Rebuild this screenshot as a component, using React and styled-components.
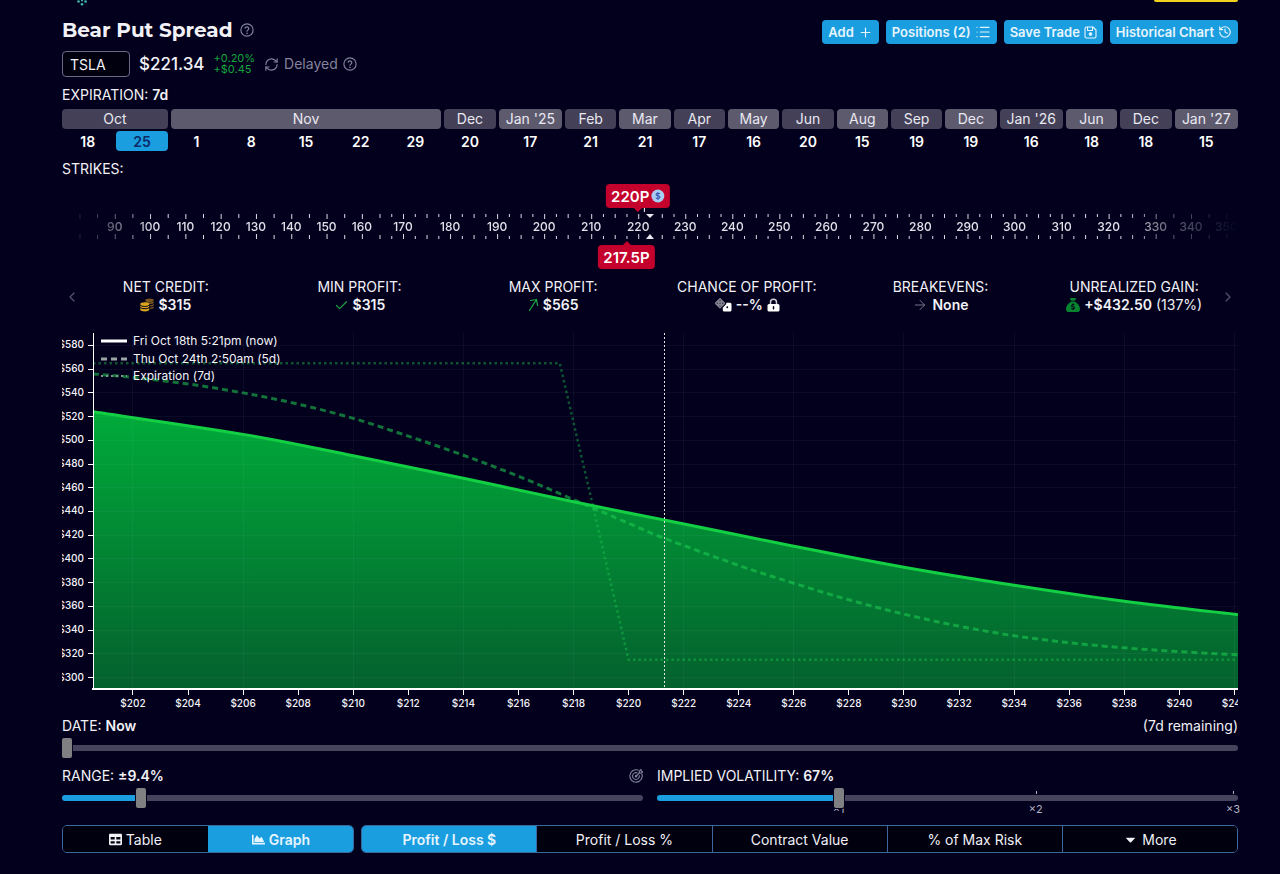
import React, { useLayoutEffect, useRef, useState } from 'react';
import styled, { createGlobalStyle, css } from 'styled-components';
import { FaCaretDown, FaChartArea, FaTable } from 'react-icons/fa';
import { FaSackDollar } from 'react-icons/fa6';
import { ArrowRight, Check, ChevronLeft, ChevronRight, History, List, Plus, RefreshCw } from 'lucide-react';

const colors = {
  page: '#02001d',
  blue: '#1b9ee0',
  track: '#46435c',
  red: '#c4002c',
  muted: '#84829c',
  text: '#f1f1f6',
};

const GlobalStyle = createGlobalStyle`
  * {
    box-sizing: border-box;
  }

  body {
    margin: 0;
    background: ${colors.page};
    color: ${colors.text};
    font-family: Inter, 'Liberation Sans', sans-serif;
    font-size: 14px;
    line-height: 18px;
  }

  button, input {
    font-family: inherit;
  }

  b {
    font-weight: 600;
  }
`;

const Page = styled.main`
  padding: 0 42px 20px 62px;
`;

const TopBar = styled.header`
  display: flex;
  justify-content: space-between;
  align-items: flex-start;
  height: 6px;
  padding-left: 14px;
`;

const Upgrade = styled.div`
  width: 84px;
  height: 2px;
  border-radius: 0 0 4px 4px;
  background: #f2d21c;
`;

const TitleRow = styled.div`
  display: flex;
  justify-content: space-between;
  align-items: flex-start;
  margin-top: 14px;
`;

const Title = styled.h1`
  display: flex;
  align-items: center;
  gap: 7px;
  margin: 0;
  font-family: Montserrat, Inter, sans-serif;
  font-size: 20px;
  font-weight: 700;
  line-height: 20px;
`;

const Actions = styled.div`
  display: flex;
  gap: 7px;
`;

const ActionButton = styled.button`
  display: flex;
  align-items: center;
  gap: 4px;
  height: 24px;
  padding: 0 6px;
  border: none;
  border-radius: 4px;
  background: ${colors.blue};
  color: #e6f5fd;
  font-size: 13px;
  font-weight: 600;
  cursor: pointer;
`;

const IconButton = styled.button`
  display: flex;
  padding: 0;
  border: none;
  background: none;
  color: ${colors.muted};
  cursor: pointer;
`;

const QuoteRow = styled.div`
  display: flex;
  align-items: center;
  gap: 9px;
  margin-top: 7px;
`;

const SymbolInput = styled.input`
  width: 68px;
  height: 26px;
  padding: 0 7px;
  border: 1px solid #6b6984;
  border-radius: 4px;
  background: #00000f;
  color: ${colors.text};
  font-size: 14px;
`;

const Price = styled.span`
  font-size: 17px;
  font-weight: 500;
`;

const Change = styled.span`
  display: flex;
  flex-direction: column;
  font-size: 11px;
  line-height: 11px;
  color: #16a83c;
`;

const Delayed = styled.span`
  display: flex;
  align-items: center;
  gap: 5px;
  color: ${colors.muted};
`;

const Label = styled.label`
  display: block;
`;

const Section = styled.section`
  margin-top: ${(props) => props.$top}px;
`;

const Months = styled.div`
  display: flex;
  gap: 3px;
  margin-top: 5px;
`;

const Month = styled.div`
  flex: ${(props) => props.$units} 1 0;
  min-width: 0;
`;

const MonthName = styled.div`
  height: 20px;
  border-radius: 4px;
  background: ${(props) => (props.$light ? '#5d5a6e' : '#434058')};
  color: #e9e8f0;
  text-align: center;
  line-height: 20px;
`;

const Days = styled.div`
  display: flex;
  gap: 3px;
  margin-top: 2px;
`;

const Day = styled.button`
  flex: 1;
  min-width: 0;
  height: 20px;
  padding: 0;
  border: none;
  border-radius: 4px;
  background: ${(props) => (props.$active ? colors.blue : 'transparent')};
  color: ${(props) => (props.$active ? '#0a2c66' : '#ffffff')};
  font-size: 14px;
  font-weight: 600;
  cursor: pointer;
`;

const RulerBox = styled.div`
  position: relative;
  margin-top: 6px;
  padding: 24px 0;
`;

const RulerSvg = styled.svg`
  display: block;
  width: 100%;
  height: 37px;
  font-size: 12px;
  font-weight: 500;
`;

const FadedTicks = styled.g`
  mask: url(#rulerFade);
`;

const Chip = styled.button`
  position: absolute;
  display: flex;
  align-items: center;
  gap: 2px;
  height: 24px;
  padding: 0 5px;
  border: none;
  border-radius: 4px;
  background: ${colors.red};
  color: #fff;
  font-size: 15px;
  font-weight: 600;
  transform: translateX(-50%);
  cursor: pointer;
  ${(props) => (props.$below ? 'bottom: 0;' : 'top: 0;')}

  &::after {
    content: '';
    position: absolute;
    left: 50%;
    margin-left: -4px;
    border: 4px solid transparent;
    ${(props) =>
      props.$below
        ? css`bottom: 100%; border-top: none; border-bottom-color: ${colors.red};`
        : css`top: 100%; border-bottom: none; border-top-color: ${colors.red};`}
  }
`;

const StatsRow = styled.section`
  position: relative;
  display: grid;
  grid-template-columns: repeat(6, 1fr);
  margin-top: 9px;
  padding: 0 7px;
`;

const Stat = styled.div`
  text-align: center;
`;

const StatValue = styled.div`
  display: flex;
  justify-content: center;
  align-items: center;
  gap: 4px;
  white-space: pre;
`;

const StatsArrow = styled(IconButton)`
  position: absolute;
  top: 11px;
  color: #55536c;
  ${(props) => (props.$right ? 'right: 2px;' : 'left: 2px;')}
`;

const ChartBox = styled.div`
  margin-top: 19px;
`;

const ChartSvg = styled.svg`
  display: block;
  width: 100%;
  height: 377px;
  fill: #f4f4f8;
  font-size: 10px;
  font-weight: 500;
`;

const Legend = styled.g`
  font-size: 12px;
  font-weight: 400;
`;

const SliderHead = styled.div`
  display: flex;
  justify-content: space-between;
  align-items: center;
`;

const SliderColumns = styled.div`
  display: grid;
  grid-template-columns: 1fr 1fr;
  gap: 14px;
  margin-top: 9px;
`;

const SliderWrap = styled.div`
  position: relative;
  margin-top: 3px;
`;

const Range = styled.input`
  appearance: none;
  position: relative;
  display: block;
  width: 100%;
  height: 20px;
  margin: 0;
  background: transparent;
  cursor: pointer;

  &::-webkit-slider-runnable-track {
    height: 6px;
    border-radius: 3px;
    background: linear-gradient(to right, ${colors.blue} var(--filled), ${colors.track} var(--filled));
  }

  &::-webkit-slider-thumb {
    appearance: none;
    width: 10px;
    height: 20px;
    margin-top: -7px;
    border-radius: 2px;
    background: #807f82;
    box-shadow: 0 0 0 1px ${colors.page};
  }
`;

const Mark = styled.span`
  position: absolute;
  top: 3px;
  padding-top: 10px;
  color: #b5b3c4;
  font-size: 11px;
  line-height: 16px;
  transform: translateX(-50%);

  &::before {
    content: '';
    position: absolute;
    top: 0;
    left: 50%;
    width: 1px;
    height: 3px;
    background: #b5b3c4;
  }
`;

const Tabs = styled.nav`
  display: grid;
  grid-template-columns: 1fr 3fr;
  gap: 7px;
  margin-top: 17px;
`;

const TabGroup = styled.div`
  display: flex;
  height: 28px;
  border: 1px solid #3d679f;
  border-radius: 5px;
  overflow: hidden;
`;

const Tab = styled.button`
  display: flex;
  flex: 1 1 0;
  justify-content: center;
  align-items: center;
  gap: 4px;
  border: none;
  border-left: 1px solid #3d679f;
  background: #00000f;
  color: ${colors.text};
  font-size: 14px;
  cursor: pointer;

  &:first-child {
    border-left: none;
  }

  ${(props) =>
    props.$active &&
    css`
      background: ${colors.blue};
      border-color: ${colors.blue};
      color: #e6f5fd;
      font-weight: 600;
    `}
`;

const HelpIcon = ({ size = 14 }) => (
  <svg width={size} height={size} viewBox="0 0 24 24" fill="none" stroke="currentColor" strokeWidth="2" strokeLinecap="round">
    <circle cx="12" cy="12" r="10.5" />
    <path d="M8.8 9a3.2 3.2 0 0 1 6.3.8c0 2.2-3.1 2.6-3.1 4.4" />
    <path d="M12 17.6v.2" strokeWidth="2.6" />
  </svg>
);

const FloppyIcon = () => (
  <svg width="13" height="13" viewBox="0 0 26 26" fill="none" stroke="currentColor" strokeWidth="2.2" strokeLinejoin="round">
    <path d="M5 2h13l6 6v13a3 3 0 0 1-3 3H5a3 3 0 0 1-3-3V5a3 3 0 0 1 3-3z" />
    <path d="M7 2v7h10V2" />
    <circle cx="13" cy="16" r="2.6" fill="currentColor" />
  </svg>
);

const TargetIcon = () => (
  <svg width="14" height="14" viewBox="0 0 28 28" fill="none" stroke="currentColor" strokeWidth="2.2" strokeLinecap="round">
    <path d="M18 2.2A12.4 12.4 0 1 0 25.8 10" />
    <path d="M16 7.6A6.8 6.8 0 1 0 20.6 13" />
    <path d="M14 14.5l7-7M20.5 7.5V4l3.5-3 .6 3.4 3.1.6-3.2 3.2z" />
    <circle cx="14" cy="14.5" r="1.4" />
  </svg>
);

const CoinsIcon = () => (
  <svg width="14" height="14" viewBox="0 0 28 28">
    <g fill="#7b5620">
      <ellipse cx="19" cy="4.5" rx="8.5" ry="3.6" />
      <path d="M10.5 6.5c2 3 15 3 17 0v3c-1.5 2-5 2.8-8 2.8l-9-3z" />
      <path d="M20.5 14c3 0 6-1 7-2.5v3c-1 1.5-4 2.5-7 2.5zM20.5 19c3 0 6-1 7-2.5v3c-1 1.5-4 2.500-7 2.500z" />
    </g>
    <g fill="#d9a51e">
      <ellipse cx="9.5" cy="12.5" rx="9" ry="3.8" />
      <path d="M.5 14.8c2.5 3.4 15.5 3.4 18 0v3c-2.5 3.4-15.5 3.4-18 0z" />
      <path d="M.5 19.6c2.5 3.4 15.5 3.4 18 0v3.8c-1.5 4.6-16.5 4.6-18 0z" />
    </g>
    <path d="M.5 14.2c2.5 3.4 15.5 3.4 18 0M.5 19.2c2.5 3.4 15.5 3.4 18 0" fill="none" stroke={colors.page} strokeWidth="1" />
  </svg>
);

const SteepArrowIcon = () => (
  <svg width="11" height="14" viewBox="0 0 22 28" fill="none" stroke="#1fae45" strokeWidth="2.4" strokeLinecap="round" strokeLinejoin="round">
    <path d="M3 25L17 3M5 5l12-2 2 12" />
  </svg>
);

const DiceIcon = () => (
  <svg width="18" height="14" viewBox="0 0 36 28">
    <rect x="4" y="2.5" width="16" height="16" rx="3" fill="#85838f" transform="rotate(45 12 10.5)" />
    <g fill={colors.page} opacity="0.7">
      <circle cx="12" cy="5" r="1.3" />
      <circle cx="6.5" cy="10.5" r="1.3" />
      <circle cx="12" cy="10.5" r="1.3" />
      <circle cx="17.5" cy="10.5" r="1.3" />
      <circle cx="12" cy="16" r="1.3" />
    </g>
    <path d="M24.5 9.5H32a3 3 0 0 1 3 3V24a3 3 0 0 1-3 3H20.5a3 3 0 0 1-3-3v-4.5l7-7.5z" fill="#fff" />
    <circle cx="26.5" cy="18.5" r="1.9" fill={colors.page} />
  </svg>
);

const LockIcon = () => (
  <svg width="13" height="14" viewBox="0 0 26 28">
    <path d="M7 13V8.5a6 6 0 0 1 12 0V13" fill="none" stroke="#cfced6" strokeWidth="3" />
    <rect x="1" y="12" width="24" height="15" rx="3" fill="#fff" />
    <rect x="11.5" y="16" width="3" height="7" rx="1.5" fill={colors.page} />
  </svg>
);

const CoinBadge = () => (
  <svg width="14" height="14" viewBox="0 0 28 28">
    <circle cx="14" cy="14" r="13" fill="#a9cdf0" />
    <path d="M18 10c-.8-1.800-7.600-2.400-7.600.8 0 3.600 7.800 2 7.800 5.800 0 3.400-7.400 3-8.200.6M14 6v16" fill="none" stroke="#3459b4" strokeWidth="2.2" />
  </svg>
);

const months = [
  { name: 'Oct', days: [18, 25], units: 105 },
  { name: 'Nov', days: [1, 8, 15, 22, 29], units: 269 },
  { name: 'Dec', days: [20], units: 51 },
  { name: "Jan '25", days: [17], units: 63 },
  { name: 'Feb', days: [21], units: 51 },
  { name: 'Mar', days: [21], units: 51 },
  { name: 'Apr', days: [17], units: 51 },
  { name: 'May', days: [16], units: 51 },
  { name: 'Jun', days: [20], units: 51 },
  { name: 'Aug', days: [15], units: 51 },
  { name: 'Sep', days: [19], units: 51 },
  { name: 'Dec', days: [19], units: 51 },
  { name: "Jan '26", days: [16], units: 63 },
  { name: 'Jun', days: [18], units: 51 },
  { name: 'Dec', days: [18], units: 51 },
  { name: "Jan '27", days: [15], units: 63 },
];

const range = (from, to, step) => {
  const out = [];
  for (let v = from; v <= to; v += step) out.push(v);
  return out;
};

// strikes listed every $2.5 take more room than the ones listed every $5
const strikePos = (strike) => {
  let units;
  if (strike <= 165) units = 317.5 - (165 - strike) * 3.53;
  else if (strike <= 330) units = 317.5 + (strike - 165) * 4.704;
  else units = 1093.7 + (strike - 330) * 3.53;
  return `${(units / 1176) * 100}%`;
};

const strikes = [...range(80, 165, 5), ...range(167.5, 330, 2.5), ...range(335, 350, 5)];

const tickHeight = (strike) => {
  if (strike % 10 === 0) return 5;
  return strike % 5 === 0 ? 4 : 3;
};

const Ruler = () => (
  <RulerBox>
    <RulerSvg>
      <defs>
        <linearGradient id="rulerGradient">
          <stop offset="0" stopColor="#fff" stopOpacity="0" />
          <stop offset="0.045" stopColor="#fff" stopOpacity="0.45" />
          <stop offset="0.08" stopColor="#fff" />
          <stop offset="0.9" stopColor="#fff" />
          <stop offset="0.94" stopColor="#fff" stopOpacity="0.45" />
          <stop offset="1" stopColor="#fff" stopOpacity="0" />
        </linearGradient>
        <mask id="rulerFade" maskUnits="userSpaceOnUse" x="0" y="0" width="100%" height="37">
          <rect width="100%" height="37" fill="url(#rulerGradient)" />
        </mask>
      </defs>
      <FadedTicks>
        {strikes.map((s) => (
          <React.Fragment key={s}>
            <rect x={strikePos(s)} y="6" width="1" height={tickHeight(s)} fill="#dcdbe6" />
            <rect x={strikePos(s)} y={31 - tickHeight(s)} width="1" height={tickHeight(s)} fill="#dcdbe6" />
          </React.Fragment>
        ))}
        {range(90, 350, 10).map((s) => (
          <text key={s} x={strikePos(s)} y="23" textAnchor="middle" fill="#e2e1ea">
            {s}
          </text>
        ))}
      </FadedTicks>
      <rect x={strikePos(221.2)} y="0" width="1" height="4" fill="#fff" />
      <svg x={strikePos(222.5)} y="0" overflow="visible">
        <path d="M-4 6h8l-4 4zM-4 31h8l-4-5z" fill="#e8e8f0" />
      </svg>
    </RulerSvg>
    <Chip style={{ left: strikePos(220) }}>
      220P <CoinBadge />
    </Chip>
    <Chip $below style={{ left: strikePos(217.5) }}>
      217.5P
    </Chip>
  </RulerBox>
);

const stats = [
  { label: 'NET CREDIT:', icon: <CoinsIcon />, value: <b>$315</b> },
  { label: 'MIN PROFIT:', icon: <Check size={15} color="#1f9c43" />, value: <b>$315</b> },
  { label: 'MAX PROFIT:', icon: <SteepArrowIcon />, value: <b>$565</b> },
  { label: 'CHANCE OF PROFIT:', icon: <DiceIcon />, value: <><b>--%</b><LockIcon /></> },
  { label: 'BREAKEVENS:', icon: <ArrowRight size={16} strokeWidth={1.5} color="#77758a" />, value: <b>None</b> },
  {
    label: 'UNREALIZED GAIN:',
    icon: <FaSackDollar size={14} color="#07832f" />,
    value: <span><b>+$432.50</b> (137%)</span>,
  },
];

const nowCurve = [
  [200.55, 524], [206, 505], [210, 487], [214, 468], [218, 448.2], [221.34, 432.6],
  [226, 410.7], [230, 393], [234, 377.8], [238, 364.3], [242.13, 353],
];

const laterCurve = [
  [200.55, 556], [202, 553], [204, 547.5], [206, 540], [208, 530.5], [210, 518.5], [212, 503.5],
  [214, 487.4], [216, 469.7], [218, 450], [220, 430], [221.34, 417], [224, 394.5],
  [226, 379.5], [228, 365.5], [230, 353.4], [232, 343.3], [234, 335.2], [236, 329.3],
  [238, 325], [240, 321.8], [242.13, 319.2],
];

const expirationCurve = [[200.55, 565], [217.5, 565], [220, 315], [242.13, 315]];

const LEFT = 31;
const BOTTOM = 356;
const MIN_PRICE = 200.55;
const MAX_PRICE = 242.13;

const smoothPath = (points) => {
  let d = `M${points[0]}`;
  for (let i = 0; i < points.length - 1; i++) {
    const p0 = points[i - 1] || points[i];
    const p1 = points[i];
    const p2 = points[i + 1];
    const p3 = points[i + 2] || p2;
    d += `C${p1[0] + (p2[0] - p0[0]) / 6},${p1[1] + (p2[1] - p0[1]) / 6} `;
    d += `${p2[0] - (p3[0] - p1[0]) / 6},${p2[1] - (p3[1] - p1[1]) / 6} ${p2[0]},${p2[1]}`;
  }
  return d;
};

const Chart = () => {
  const box = useRef(null);
  const [width, setWidth] = useState(1176);

  useLayoutEffect(() => {
    const measure = () => setWidth(box.current.clientWidth);
    measure();
    window.addEventListener('resize', measure);
    return () => window.removeEventListener('resize', measure);
  }, []);

  const x = (price) => LEFT + ((price - MIN_PRICE) / (MAX_PRICE - MIN_PRICE)) * (width - LEFT);
  const y = (value) => 344.5 - (value - 300) * 1.186;
  const project = (curve) => curve.map(([price, value]) => [x(price), y(value)]);

  const nowPath = smoothPath(project(nowCurve));
  const prices = range(202, 242, 2);
  const values = range(300, 580, 20);

  return (
    <ChartBox ref={box}>
      <ChartSvg>
        <defs>
          <linearGradient id="profit" gradientUnits="userSpaceOnUse" x1="0" y1="78" x2="0" y2={BOTTOM}>
            <stop offset="0" stopColor="#00ab3a" />
            <stop offset="1" stopColor="#04602d" />
          </linearGradient>
        </defs>
        <path d={`${nowPath}V${BOTTOM}H${LEFT}Z`} fill="url(#profit)" />
        <g stroke="#c8d2ff" strokeOpacity="0.05" shapeRendering="crispEdges">
          {values.map((v) => (
            <line key={v} x1={LEFT} x2={width} y1={y(v)} y2={y(v)} />
          ))}
          {range(202, 242, 4).map((p) => (
            <line key={p} x1={x(p)} x2={x(p)} y1="0" y2={BOTTOM} />
          ))}
        </g>
        <g fill="none">
          <path
            d={`M${project(expirationCurve).join('L')}`}
            stroke="#1fc750"
            strokeOpacity="0.42"
            strokeWidth="2.5"
            strokeDasharray="2.5 3"
          />
          <path
            d={smoothPath(project(laterCurve))}
            stroke="#1fd052"
            strokeOpacity="0.55"
            strokeWidth="3"
            strokeDasharray="6 4"
          />
          <path d={nowPath} stroke="#12cf43" strokeWidth="3" />
        </g>
        <line x1={x(221.32)} x2={x(221.32)} y1="0" y2={BOTTOM} stroke="#dfe6e0" strokeDasharray="2 2" shapeRendering="crispEdges" />

        <g stroke="#fff" shapeRendering="crispEdges">
          <line x1={LEFT} x2={LEFT} y1="0" y2={BOTTOM} />
          <line x1={LEFT - 1} x2={width} y1={BOTTOM} y2={BOTTOM} strokeWidth="2" />
          {values.map((v) => (
            <line key={v} x1={LEFT - 5} x2={LEFT} y1={y(v)} y2={y(v)} />
          ))}
          {prices.map((p) => (
            <line key={p} x1={x(p)} x2={x(p)} y1={BOTTOM} y2={BOTTOM + 6} />
          ))}
        </g>
        {values.map((v) => (
          <text key={v} x="22" y={y(v) + 3} textAnchor="end">
            ${v}
          </text>
        ))}
        {prices.map((p) => (
          <text key={p} x={x(p)} y="374" textAnchor="middle">
            ${p}
          </text>
        ))}

        <g stroke="#fff" strokeWidth="3">
          <line x1="39" x2="65" y1="8" y2="8" />
          <line x1="39" x2="65" y1="26" y2="26" stroke="#98a5a4" strokeDasharray="6 4" />
          <line x1="39" x2="65" y1="43" y2="43" stroke="#7f978c" strokeWidth="2" strokeDasharray="2 3" />
        </g>
        <Legend>
          <text x="71" y="12">Fri Oct 18th 5:21pm (now)</text>
          <text x="71" y="30">Thu Oct 24th 2:50am (5d)</text>
          <text x="71" y="47">Expiration (7d)</text>
        </Legend>
      </ChartSvg>
    </ChartBox>
  );
};

const Slider = ({ id, min, max, value, onChange, marks = [] }) => {
  const ratio = (v) => (v - min) / (max - min);
  // the thumb is 10px wide, so its centre travels 10px less than the track
  const centre = (v) => `calc(5px + (100% - 10px) * ${ratio(v)})`;

  return (
    <SliderWrap>
      {marks.map((mark) => (
        <Mark key={mark.label} style={{ left: centre(mark.value) }}>
          {mark.label}
        </Mark>
      ))}
      <Range
        type="range"
        id={id}
        min={min}
        max={max}
        step="any"
        value={value}
        onChange={(event) => onChange(Number(event.target.value))}
        style={{ '--filled': value === min ? '0px' : centre(value) }}
      />
    </SliderWrap>
  );
};

const metrics = ['Profit / Loss $', 'Profit / Loss %', 'Contract Value', '% of Max Risk'];

const App = () => {
  const [symbol, setSymbol] = useState('TSLA');
  const [expiration, setExpiration] = useState('Oct-25');
  const [date, setDate] = useState(0);
  const [priceRange, setPriceRange] = useState(9.4);
  const [volatility, setVolatility] = useState(67);
  const [view, setView] = useState('Graph');
  const [metric, setMetric] = useState(metrics[0]);

  return (
    <Page>
      <GlobalStyle />
      <TopBar>
        <svg width="12" height="6" viewBox="0 0 12 6" fill="#3fb8b0">
          <circle cx="2.5" cy="1.5" r="1.3" />
          <circle cx="6" cy="4.3" r="1.3" />
          <circle cx="9.5" cy="1.5" r="1.3" />
          <circle cx="6" cy="0.5" r="1" />
        </svg>
        <Upgrade />
      </TopBar>

      <TitleRow>
        <Title>
          Bear Put Spread
          <IconButton aria-label="About this strategy"><HelpIcon /></IconButton>
        </Title>
        <Actions>
          <ActionButton>Add <Plus size={15} strokeWidth={1.8} /></ActionButton>
          <ActionButton>Positions (2) <List size={16} strokeWidth={1.8} /></ActionButton>
          <ActionButton>Save Trade <FloppyIcon /></ActionButton>
          <ActionButton>Historical Chart <History size={14} strokeWidth={2} /></ActionButton>
        </Actions>
      </TitleRow>

      <QuoteRow>
        <SymbolInput aria-label="Symbol" value={symbol} onChange={(event) => setSymbol(event.target.value)} />
        <Price>$221.34</Price>
        <Change>
          <span>+0.20%</span>
          <span>+$0.45</span>
        </Change>
        <Delayed>
          <RefreshCw size={15} strokeWidth={1.8} />
          Delayed
          <HelpIcon />
        </Delayed>
      </QuoteRow>

      <Section $top={9}>
        <Label as="div">EXPIRATION: <b>7d</b></Label>
        <Months>
          {months.map((month, i) => (
            <Month key={i} $units={month.units}>
              <MonthName $light={i % 2 === 1}>{month.name}</MonthName>
              <Days>
                {month.days.map((day) => {
                  const id = i === 0 ? `Oct-${day}` : `${i}-${day}`;
                  return (
                    <Day key={day} $active={id === expiration} onClick={() => setExpiration(id)}>
                      {day}
                    </Day>
                  );
                })}
              </Days>
            </Month>
          ))}
        </Months>
      </Section>

      <Section $top={9}>
        <Label as="div">STRIKES:</Label>
        <Ruler />
      </Section>

      <StatsRow>
        {stats.map((stat) => (
          <Stat key={stat.label}>
            {stat.label}
            <StatValue>
              {stat.icon}
              {stat.value}
            </StatValue>
          </Stat>
        ))}
        <StatsArrow aria-label="Previous"><ChevronLeft size={16} strokeWidth={1.8} /></StatsArrow>
        <StatsArrow aria-label="Next" $right><ChevronRight size={16} strokeWidth={1.8} /></StatsArrow>
      </StatsRow>

      <Chart />

      <Section $top={7}>
        <SliderHead>
          <Label htmlFor="date">DATE: <b>Now</b></Label>
          <Label as="span">(7d remaining)</Label>
        </SliderHead>
        <Slider id="date" min={0} max={7} value={date} onChange={setDate} />
      </Section>

      <SliderColumns>
        <div>
          <SliderHead>
            <Label htmlFor="range">RANGE: <b>±{priceRange.toFixed(1)}%</b></Label>
            <IconButton aria-label="Reset range"><TargetIcon /></IconButton>
          </SliderHead>
          <Slider id="range" min={1} max={66} value={priceRange} onChange={setPriceRange} />
        </div>
        <div>
          <SliderHead>
            <Label htmlFor="volatility">IMPLIED VOLATILITY: <b>{Math.round(volatility)}%</b></Label>
          </SliderHead>
          <Slider
            id="volatility"
            min={7}
            max={201}
            value={volatility}
            onChange={setVolatility}
            marks={[
              { label: '×1', value: 67 },
              { label: '×2', value: 134 },
              { label: '×3', value: 201 },
            ]}
          />
        </div>
      </SliderColumns>

      <Tabs>
        <TabGroup>
          <Tab $active={view === 'Table'} onClick={() => setView('Table')}><FaTable size={13} /> Table</Tab>
          <Tab $active={view === 'Graph'} onClick={() => setView('Graph')}><FaChartArea size={13} /> Graph</Tab>
        </TabGroup>
        <TabGroup>
          {metrics.map((name) => (
            <Tab key={name} $active={metric === name} onClick={() => setMetric(name)}>
              {name}
            </Tab>
          ))}
          <Tab><FaCaretDown size={15} /> More</Tab>
        </TabGroup>
      </Tabs>
    </Page>
  );
};

export default App;
